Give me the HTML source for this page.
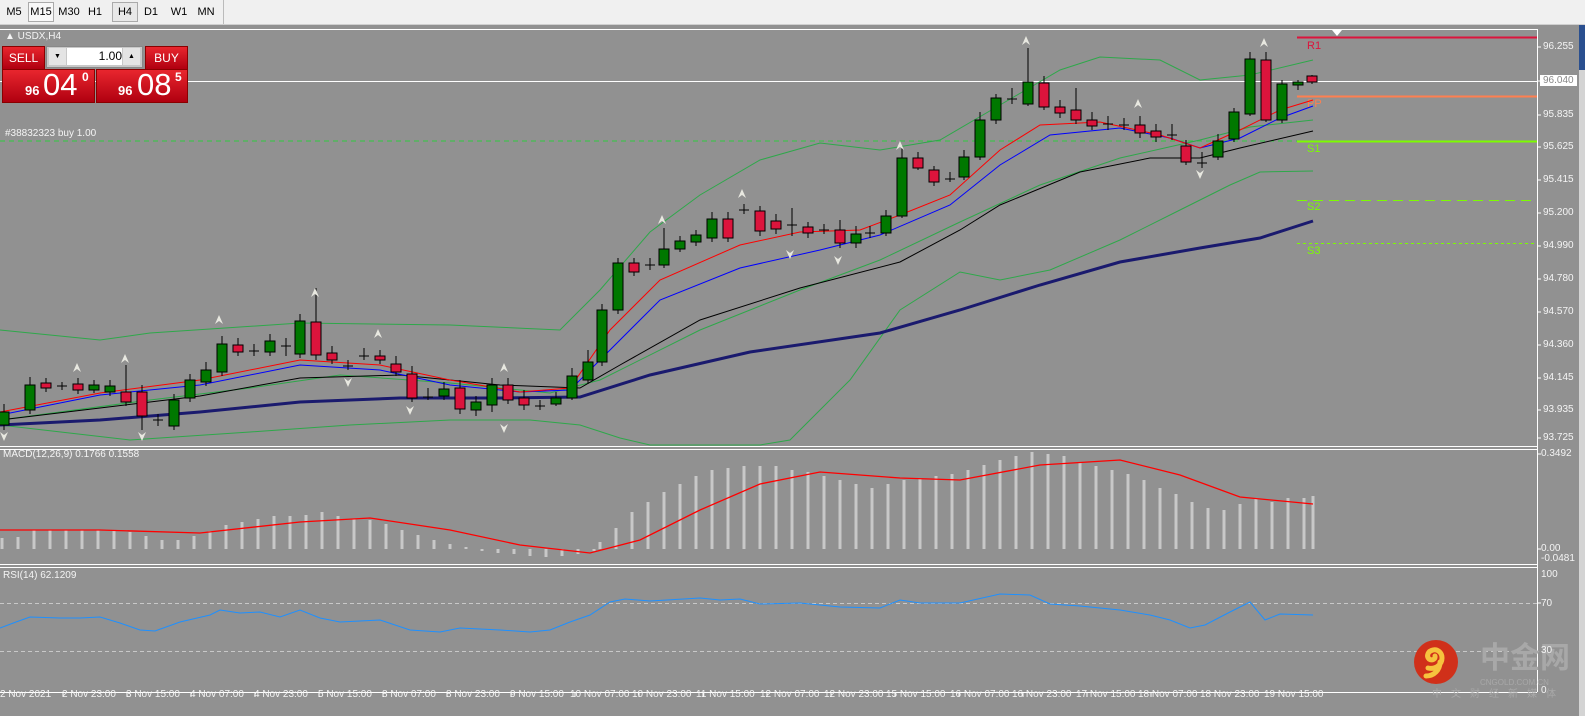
<!DOCTYPE html>
<html><head><meta charset="utf-8"><style>
body{margin:0;width:1585px;height:716px;overflow:hidden;background:#919191;font-family:"Liberation Sans",sans-serif;position:relative}
.tb{position:absolute;left:0;top:0;width:1585px;height:24px;background:#f0f0f0;border-bottom:1px solid #cfcfcf}
.tb span{position:absolute;top:3px;height:18px;line-height:18px;font-size:11px;color:#000;text-align:center}
.ax{position:absolute;font-size:10px;color:#f4f4f4;white-space:nowrap}
.btn{position:absolute;background:linear-gradient(#e8262e,#b00010);color:#fff;border:1px solid #8a0000}
.tl span{position:absolute;white-space:nowrap}
</style></head><body>
<div class="tb">
<span style="left:4px;width:20px">M5</span>
<span style="left:28px;width:24px;border:1px solid #aaa;background:#f8f8f8;top:2px">M15</span>
<span style="left:57px;width:24px">M30</span>
<span style="left:86px;width:18px">H1</span>
<span style="left:112px;width:24px;border:1px solid #aaa;background:#e8e8e8;top:2px">H4</span>
<span style="left:142px;width:18px">D1</span>
<span style="left:170px;width:18px">W1</span>
<span style="left:197px;width:18px">MN</span>
<span style="left:223px;width:1px;background:#bbb;top:0;height:24px"></span>
</div>
<div style="position:absolute;left:1579px;top:25px;width:6px;height:691px;background:#d4d4d4"></div>
<div style="position:absolute;left:1579px;top:25px;width:6px;height:45px;background:#2a4f8f"></div>
<svg width="1585" height="716" style="position:absolute;left:0;top:0" xmlns="http://www.w3.org/2000/svg">
<g stroke="#fff" stroke-width="1" fill="none">
<line x1="0" y1="29.5" x2="1537" y2="29.5"/>
<line x1="1537.5" y1="29" x2="1537.5" y2="692"/>
<line x1="0" y1="446.5" x2="1537" y2="446.5"/><line x1="0" y1="449.5" x2="1537" y2="449.5"/>
<line x1="0" y1="564.5" x2="1537" y2="564.5"/><line x1="0" y1="567.5" x2="1537" y2="567.5"/>
<line x1="0" y1="692.5" x2="1537" y2="692.5"/>
</g>
<polygon points="1332,30 1342,30 1337,36" fill="#fff"/>
<line x1="0" y1="141" x2="1297" y2="141" stroke="#2ecc40" stroke-dasharray="5,4"/>
<line x1="0" y1="81.5" x2="1537" y2="81.5" stroke="#fff"/>
<line x1="1297" y1="37.5" x2="1537" y2="37.5" stroke="#dc143c" stroke-width="2"/>
<line x1="1297" y1="96.5" x2="1537" y2="96.5" stroke="#ff7f50" stroke-width="2"/>
<line x1="1297" y1="141.5" x2="1537" y2="141.5" stroke="#7cfc00" stroke-width="2"/>
<line x1="1297" y1="200.5" x2="1537" y2="200.5" stroke="#7cfc00" stroke-dasharray="10,6"/>
<line x1="1297" y1="243.5" x2="1537" y2="243.5" stroke="#7cfc00" stroke-dasharray="3,3"/>
<g font-size="11" font-family="Liberation Sans,sans-serif">
<text x="1307" y="49" fill="#dc143c">R1</text><text x="1307" y="107" fill="#ff7f50">PP</text>
<text x="1307" y="152" fill="#7cfc00">S1</text><text x="1307" y="210" fill="#7cfc00">S2</text><text x="1307" y="254" fill="#7cfc00">S3</text>
</g>
<g fill="none">
<polyline stroke="#2ea84a" points="0,330 100,340 150,333 300,323 450,325 560,330 600,290 650,232 700,195 760,160 820,143 880,150 940,140 1000,105 1060,70 1100,57 1160,60 1200,80 1250,75 1313,60"/>
<polyline stroke="#2ea84a" points="0,425 130,440 250,432 350,425 450,420 530,420 580,425 620,438 650,445 760,445 790,440 850,380 900,310 960,272 1000,280 1050,270 1120,240 1180,210 1230,185 1260,172 1313,171"/>
<polyline stroke="#2ea84a" points="0,420 150,400 250,388 340,375 450,383 550,393 600,380 700,330 800,290 880,260 960,222 1040,185 1120,158 1200,140 1250,127 1313,120"/>
<polyline stroke="#1a1a6e" stroke-width="3" points="0,425 100,420 200,412 300,402 400,398 500,398 580,397 650,375 750,352 880,333 960,310 1040,285 1120,262 1200,248 1260,238 1313,221"/>
<polyline stroke="#000" points="0,420 100,408 200,396 300,378 400,375 500,385 580,388 620,365 700,320 800,288 900,262 960,230 1000,205 1080,172 1150,158 1200,158 1240,148 1313,131"/>
<polyline stroke="#0000ff" points="0,415 100,395 200,385 300,365 380,370 450,385 520,392 570,390 610,350 660,300 740,268 820,250 880,235 950,205 1000,165 1050,135 1120,128 1170,138 1200,148 1240,138 1280,118 1313,106"/>
<polyline stroke="#ff0000" points="0,412 100,393 200,380 300,360 380,365 450,380 520,392 570,388 610,330 660,280 740,245 800,232 860,230 900,215 950,195 1000,150 1040,125 1100,122 1160,135 1200,148 1240,130 1280,110 1313,100"/>
</g>
<g stroke="#000" stroke-width="1">
<path d="M4 404V430M30 377V414M46 378V392M62 382V390M78 378V394M94 380V393M110 380V396M126 365V406M142 385V430M158 414V426M174 394V430M190 374V402M206 362V386M222 336V376M238 338V356M254 344V356M270 334V356M286 338V356M300 314V358M316 288V360M332 346V364M348 360V370M364 348V360M380 350V364M396 356V376M412 366V402M428 388V400M444 382V400M460 380V414M476 396V416M492 378V412M508 378V404M524 390V410M540 400V410M556 392V406M572 368V400M588 350V384M602 304V366M618 258V314M634 258V276M650 258V270M664 228V268M680 236V252M696 230V246M712 212V242M728 212V242M744 204V214M760 206V236M776 214V234M792 208V236M808 222V238M824 224V234M840 220V248M856 226V248M870 226V238M886 210V236M902 148V218M918 152V170M934 166V186M950 172V182M964 150V180M980 112V160M996 94V124M1012 88V104M1028 48V106M1044 76V110M1060 100V118M1076 88V124M1092 112V130M1108 116V130M1124 118V130M1140 116V138M1156 124V142M1172 124V140M1186 140V165M1202 152V168M1218 134V160M1234 108V142M1250 52V116M1266 52V122M1282 80V123M1298 80V90M1312 75V84"/>
</g>
<g stroke="#000">
<g fill="#007800">
<rect x="-1" y="412" width="10" height="13"/><rect x="25" y="385" width="10" height="25"/><rect x="89" y="385" width="10" height="5"/><rect x="105" y="386" width="10" height="6"/><rect x="169" y="400" width="10" height="26"/><rect x="185" y="380" width="10" height="18"/><rect x="201" y="370" width="10" height="12"/><rect x="217" y="344" width="10" height="28"/><rect x="265" y="341" width="10" height="11"/><rect x="295" y="321" width="10" height="33"/><rect x="439" y="389" width="10" height="7"/><rect x="471" y="402" width="10" height="8"/><rect x="487" y="385" width="10" height="20"/><rect x="551" y="398" width="10" height="6"/><rect x="567" y="376" width="10" height="22"/><rect x="583" y="362" width="10" height="18"/><rect x="597" y="310" width="10" height="52"/><rect x="613" y="263" width="10" height="47"/><rect x="659" y="249" width="10" height="16"/><rect x="675" y="241" width="10" height="8"/><rect x="691" y="235" width="10" height="7"/><rect x="707" y="219" width="10" height="19"/><rect x="851" y="234" width="10" height="9"/><rect x="881" y="216" width="10" height="17"/><rect x="897" y="158" width="10" height="58"/><rect x="959" y="157" width="10" height="20"/><rect x="975" y="120" width="10" height="37"/><rect x="991" y="98" width="10" height="22"/><rect x="1023" y="82" width="10" height="22"/><rect x="1213" y="141" width="10" height="16"/><rect x="1229" y="112" width="10" height="27"/><rect x="1245" y="59" width="10" height="55"/><rect x="1277" y="84" width="10" height="36"/><rect x="1293" y="82" width="10" height="3"/>
</g>
<g fill="#dc143c">
<rect x="41" y="383" width="10" height="5"/><rect x="73" y="384" width="10" height="6"/><rect x="121" y="392" width="10" height="10"/><rect x="137" y="392" width="10" height="24"/><rect x="233" y="345" width="10" height="7"/><rect x="311" y="322" width="10" height="33"/><rect x="327" y="353" width="10" height="7"/><rect x="375" y="356" width="10" height="4"/><rect x="391" y="364" width="10" height="8"/><rect x="407" y="374" width="10" height="24"/><rect x="455" y="388" width="10" height="21"/><rect x="503" y="385" width="10" height="15"/><rect x="519" y="398" width="10" height="7"/><rect x="629" y="263" width="10" height="9"/><rect x="723" y="219" width="10" height="19"/><rect x="755" y="211" width="10" height="20"/><rect x="771" y="221" width="10" height="8"/><rect x="803" y="227" width="10" height="6"/><rect x="835" y="230" width="10" height="13"/><rect x="913" y="158" width="10" height="10"/><rect x="929" y="170" width="10" height="12"/><rect x="1039" y="83" width="10" height="24"/><rect x="1055" y="107" width="10" height="6"/><rect x="1071" y="110" width="10" height="10"/><rect x="1087" y="120" width="10" height="6"/><rect x="1135" y="125" width="10" height="8"/><rect x="1151" y="131" width="10" height="6"/><rect x="1181" y="146" width="10" height="16"/><rect x="1261" y="60" width="10" height="60"/><rect x="1307" y="76" width="10" height="6"/>
</g>
<path d="M57 386H67M153 420H163M249 351H259M281 346H291M343 366H353M359 356H369M423 397H433M535 406H545M645 265H655M739 210H749M787 225H797M819 230H829M865 233H875M945 179H955M1007 99H1017M1103 124H1113M1119 125H1129M1167 135H1177M1197 163H1207" fill="none"/>
</g>
<g fill="#e8e8e0">
<path d="M1022 45l4-9 4 9-4-3z"/><path d="M1260 47l4-9 4 9-4-3z"/><path d="M896 150l4-9 4 9-4-3z"/><path d="M738 198l4-9 4 9-4-3z"/><path d="M658 224l4-9 4 9-4-3z"/><path d="M311 297l4-9 4 9-4-3z"/><path d="M215 324l4-9 4 9-4-3z"/><path d="M121 363l4-9 4 9-4-3z"/><path d="M374 338l4-9 4 9-4-3z"/><path d="M500 372l4-9 4 9-4-3z"/><path d="M1134 108l4-9 4 9-4-3z"/><path d="M73 372l4-9 4 9-4-3z"/>
<path d="M1196 170l4 9 4-9-4 3z"/><path d="M786 250l4 9 4-9-4 3z"/><path d="M834 256l4 9 4-9-4 3z"/><path d="M344 378l4 9 4-9-4 3z"/><path d="M406 406l4 9 4-9-4 3z"/><path d="M500 424l4 9 4-9-4 3z"/><path d="M138 432l4 9 4-9-4 3z"/><path d="M0 432l4 9 4-9-4 3z"/>
</g>
<g stroke="#c8c8c8" stroke-width="3">
<path d="M2 538V549M18 537V549M34 530V549M50 530V549M66 530V549M82 530V549M98 530V549M114 530V549M130 532V549M146 536V549M162 540V549M178 540V549M194 536V549M210 531V549M226 525V549M242 522V549M258 519V549M274 516V549M290 516V549M306 515V549M322 512V549M338 516V549M354 519V549M370 520V549M386 524V549M402 530V549M418 535V549M434 540V549M450 544V549M466 547V549M482 549V551M498 549V553M514 549V554M530 549V556M546 549V557M562 549V556M578 549V554M594 549V551M600 542V549M616 528V549M632 512V549M648 502V549M664 492V549M680 484V549M696 476V549M712 470V549M728 468V549M744 466V549M760 466V549M776 466V549M792 470V549M808 472V549M824 476V549M840 480V549M856 484V549M872 488V549M888 484V549M904 480V549M920 478V549M936 476V549M952 474V549M968 470V549M984 465V549M1000 460V549M1016 456V549M1032 452V549M1048 454V549M1064 456V549M1080 462V549M1096 466V549M1112 470V549M1128 474V549M1144 480V549M1160 488V549M1176 494V549M1192 502V549M1208 508V549M1224 510V549M1240 504V549M1256 498V549M1272 502V549M1288 498V549M1304 498V549M1313 496V549"/>
</g>
<polyline fill="none" stroke="#ff0000" stroke-width="1.3" points="0,530 100,530 200,533 300,522 370,518 450,530 520,545 590,553 640,540 700,510 760,484 820,472 900,478 960,480 1040,465 1120,460 1180,475 1240,497 1313,504"/>
<line x1="0" y1="603.5" x2="1537" y2="603.5" stroke="#c8c8c8" stroke-dasharray="4,3"/>
<line x1="0" y1="651.5" x2="1537" y2="651.5" stroke="#c8c8c8" stroke-dasharray="4,3"/>
<polyline fill="none" stroke="#1e90ff" points="0,628 16,622 30,617 60,618 80,618 100,617 120,623 140,630 155,631 180,622 210,615 220,610 240,613 260,612 280,617 300,610 320,618 340,622 380,620 410,630 440,632 460,628 500,630 530,632 550,630 570,622 590,615 610,602 625,599 650,601 700,598 720,600 740,599 760,604 800,603 840,607 880,608 900,600 920,603 960,603 1000,594 1030,595 1050,604 1080,606 1120,610 1150,615 1170,620 1190,628 1205,625 1230,612 1250,602 1265,620 1280,614 1313,615"/>
<g stroke="#fff"><path d="M1537 47h4M1537 81h4M1537 115h4M1537 147h4M1537 180h4M1537 213h4M1537 246h4M1537 279h4M1537 312h4M1537 345h4M1537 378h4M1537 410h4M1537 438h4M1537 454h4M1537 549h4M1537 603h4M63 693v4M127 693v4M191 693v4M255 693v4M319 693v4M383 693v4M447 693v4M511 693v4M575 693v4M639 693v4M703 693v4M767 693v4M831 693v4M895 693v4M959 693v4M1023 693v4M1087 693v4M1151 693v4M1215 693v4M1279 693v4"/></g>
<circle cx="1436" cy="662" r="22" fill="#d0301a"/>
<path d="M1428 668c8 2 14-4 14-10c0-6-5-9-9-8c-5 1-7 6-4 9c3 2 7 0 6-3M1440 662c0 8-6 14-14 14" stroke="#f6c23e" stroke-width="5" fill="none" stroke-linecap="round"/>
<text x="1480" y="668" font-size="30" fill="#a8a8a8" font-family="Liberation Sans,Noto Sans CJK SC,sans-serif" font-weight="bold">中金网</text>
<text x="1480" y="685" font-size="8" fill="#a8a8a8" font-family="Liberation Sans,sans-serif">CNGOLD.COM.CN</text>
<text x="1432" y="697" font-size="10" fill="#a8a8a8" letter-spacing="9" font-family="Liberation Sans,Noto Sans CJK SC,sans-serif">中文财经新媒体</text>
</svg>
<div class="ax" style="left:5px;top:31px">&#9650; USDX,H4</div>
<div class="ax" style="left:5px;top:128px">#38832323 buy 1.00</div>
<div class="ax" style="left:3px;top:449px">MACD(12,26,9) 0.1766 0.1558</div>
<div class="ax" style="left:3px;top:570px">RSI(14) 62.1209</div>
<div class="ax" style="left:1543px;top:41px">96.255</div>
<div class="ax" style="left:1540px;top:75px;background:#fff;color:#888;padding:0 3px">96.040</div>
<div class="ax" style="left:1543px;top:109px">95.835</div>
<div class="ax" style="left:1543px;top:141px">95.625</div>
<div class="ax" style="left:1543px;top:174px">95.415</div>
<div class="ax" style="left:1543px;top:207px">95.200</div>
<div class="ax" style="left:1543px;top:240px">94.990</div>
<div class="ax" style="left:1543px;top:273px">94.780</div>
<div class="ax" style="left:1543px;top:306px">94.570</div>
<div class="ax" style="left:1543px;top:339px">94.360</div>
<div class="ax" style="left:1543px;top:372px">94.145</div>
<div class="ax" style="left:1543px;top:404px">93.935</div>
<div class="ax" style="left:1543px;top:432px">93.725</div>
<div class="ax" style="left:1541px;top:448px">0.3492</div>
<div class="ax" style="left:1541px;top:543px">0.00</div>
<div class="ax" style="left:1541px;top:553px">-0.0481</div>
<div class="ax" style="left:1541px;top:569px">100</div>
<div class="ax" style="left:1541px;top:598px">70</div>
<div class="ax" style="left:1541px;top:645px">30</div>
<div class="ax" style="left:1541px;top:685px">0</div>
<div class="ax tl" style="left:0;top:689px;width:1320px;height:14px">
<span style="left:0">2 Nov 2021</span><span style="left:62px">2 Nov 23:00</span><span style="left:126px">3 Nov 15:00</span><span style="left:190px">4 Nov 07:00</span><span style="left:254px">4 Nov 23:00</span><span style="left:318px">5 Nov 15:00</span><span style="left:382px">8 Nov 07:00</span><span style="left:446px">8 Nov 23:00</span><span style="left:510px">9 Nov 15:00</span><span style="left:570px">10 Nov 07:00</span><span style="left:632px">10 Nov 23:00</span><span style="left:696px">11 Nov 15:00</span><span style="left:760px">12 Nov 07:00</span><span style="left:824px">12 Nov 23:00</span><span style="left:886px">15 Nov 15:00</span><span style="left:950px">16 Nov 07:00</span><span style="left:1012px">16 Nov 23:00</span><span style="left:1076px">17 Nov 15:00</span><span style="left:1138px">18 Nov 07:00</span><span style="left:1200px">18 Nov 23:00</span><span style="left:1264px">19 Nov 15:00</span>
</div>
<div class="btn" style="left:2px;top:46px;width:41px;height:22px;font-size:12px;text-align:center;line-height:22px">SELL</div>
<div style="position:absolute;left:46px;top:46px;width:95px;height:20px;background:#c8c8c8;border:1px solid #888"></div>
<div style="position:absolute;left:49px;top:48px;width:17px;height:17px;background:#e4e4e4;font-size:7px;text-align:center;line-height:17px">&#9660;</div>
<div style="position:absolute;left:67px;top:48px;width:55px;height:17px;background:#fff;font-size:12px;text-align:right;line-height:17px">1.00</div>
<div style="position:absolute;left:123px;top:48px;width:17px;height:17px;background:#e4e4e4;font-size:7px;text-align:center;line-height:17px">&#9650;</div>
<div class="btn" style="left:145px;top:46px;width:41px;height:22px;font-size:12px;text-align:center;line-height:22px">BUY</div>
<div class="btn" style="left:2px;top:69px;width:91px;height:32px">
<span style="position:absolute;left:22px;top:13px;font-size:13px;font-weight:bold">96</span><span style="position:absolute;left:40px;top:-3px;font-size:31px">04</span><span style="position:absolute;left:79px;top:0;font-size:12px;font-weight:bold">0</span></div>
<div class="btn" style="left:96px;top:69px;width:90px;height:32px">
<span style="position:absolute;left:21px;top:13px;font-size:13px;font-weight:bold">96</span><span style="position:absolute;left:40px;top:-3px;font-size:31px">08</span><span style="position:absolute;left:78px;top:0;font-size:12px;font-weight:bold">5</span></div>
</body></html>
